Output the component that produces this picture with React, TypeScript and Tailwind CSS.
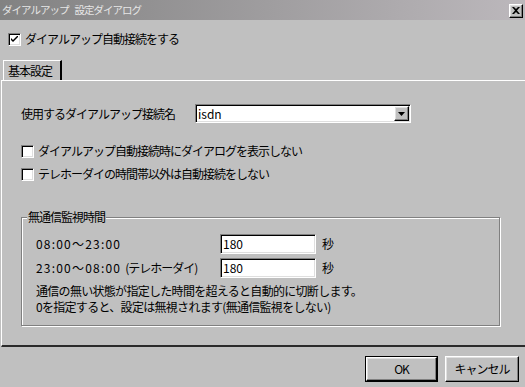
import React from "react";

// ── Win9x style bevels ────────────────────────────────────────────────────────
const raised =
  "border border-t-white border-l-white border-b-[#000] border-r-[#000] shadow-[inset_-1px_-1px_0_#808080,inset_1px_1px_0_#dfdfdf]";
const sunken =
  "border border-t-[#808080] border-l-[#808080] border-b-white border-r-white shadow-[inset_1px_1px_0_#000,inset_-1px_-1px_0_#dfdfdf]";

function CheckBox({ checked = false }: { checked?: boolean }) {
  return (
    <span className={`flex h-[13px] w-[13px] shrink-0 items-center justify-center bg-white ${sunken}`}>
      {checked && (
        <svg width="7" height="7" viewBox="0 0 7 7">
          <path d="M0 2 L0 4 L2 6 L7 1 L7 -1 L2 4 Z" fill="#000" />
        </svg>
      )}
    </span>
  );
}

function CheckRow({ label, checked }: { label: string; checked?: boolean }) {
  return (
    <label className="flex items-center gap-[4px] leading-[14px]">
      <CheckBox checked={checked} />
      <span>{label}</span>
    </label>
  );
}

function TimeRow({ time, note, value }: { time: string; note?: string; value: string }) {
  return (
    <div className="flex h-[20px] items-center">
      <span className="w-[198px] pl-[14px]">
        <span className="tracking-[1.2px]">{time}</span>
        {note && <span className="ml-[4px]">{note}</span>}
      </span>
      <div className={`flex h-[20px] w-[96px] items-center bg-white pl-[2px] tracking-normal text-black ${sunken}`}>
        {value}
      </div>
      <span className="ml-[6px]">秒</span>
    </div>
  );
}

export default function App() {
  return (
    <div
      className="flex h-[387px] w-[525px] flex-col overflow-hidden bg-[#c0c0c0] text-[12px] tracking-[-1px] text-[#000]"
      style={{ fontFamily: '"Noto Sans CJK JP", "Noto Sans", sans-serif' }}
    >
      {/* ── Title bar ─────────────────────────────────────────────────── */}
      <div className="flex h-[20px] shrink-0 items-center justify-between bg-gradient-to-r from-[#828282] to-[#bcb8bc] pl-[2px] pr-[2px]">
        <span className="flex text-[10.5px] leading-[14px] tracking-[-1px] text-[#e6e6e6]">
          <span>ダイアルアップ</span>
          <span className="ml-[6px]">設定ダイアログ</span>
        </span>
        <button className={`mt-[1px] flex h-[14px] w-[14px] items-center justify-center bg-[#c0c0c0] ${raised}`}>
          <svg width="8" height="7" viewBox="0 0 8 7">
            <path d="M0 0 L2 0 L4 2 L6 0 L8 0 L5 3.5 L8 7 L6 7 L4 5 L2 7 L0 7 L3 3.5 Z" fill="#000" />
          </svg>
        </button>
      </div>

      {/* ── Main checkbox ─────────────────────────────────────────────── */}
      <div className="mt-[12px] pl-[8px]">
        <CheckRow label="ダイアルアップ自動接続をする" checked />
      </div>

      {/* ── Tab header ────────────────────────────────────────────────── */}
      <div className="mt-[14px] flex h-[20px] pl-[3px]">
        <div className="flex items-center border-l border-t border-r-2 border-l-white border-t-white border-r-[#000] pl-[4px] pr-[8px] leading-[14px]">
          基本設定
        </div>
      </div>

      {/* ── Tab page ──────────────────────────────────────────────────── */}
      <div className="ml-[1px] flex h-[267px] shrink-0 flex-col border-l border-t border-b-2 border-l-white border-t-white border-b-[#2a2a2a] pl-[19px]">
        <div className="mt-[23px] flex h-[19px] items-center">
          <span className="w-[174px] leading-[14px]">使用するダイアルアップ接続名</span>
          <div className={`flex h-[19px] w-[216px] items-center justify-between bg-white pl-[2px] pr-[1px] tracking-normal text-black ${sunken}`}>
            <span>isdn</span>
            <span className={`flex h-[15px] w-[15px] items-center justify-center bg-[#c0c0c0] ${raised}`}>
              <svg width="7" height="4" viewBox="0 0 7 4">
                <path d="M0 0 L7 0 L3.5 4 Z" fill="#000" />
              </svg>
            </span>
          </div>
        </div>

        <div className="mt-[21px]">
          <CheckRow label="ダイアルアップ自動接続時にダイアログを表示しない" />
        </div>
        <div className="mt-[9px]">
          <CheckRow label="テレホーダイの時間帯以外は自動接続をしない" />
        </div>

        {/* Group box */}
        <div className="relative mt-[36px] h-[109px] w-[479px] border border-[#808080] shadow-[inset_1px_1px_0_#fff,1px_1px_0_#fff]">
          <span className="absolute -top-[8px] left-[5px] bg-[#c0c0c0] px-[1px] leading-[14px]">
            無通信監視時間
          </span>
          <div className="mt-[16px] flex flex-col gap-[4px]">
            <TimeRow time="08:00〜23:00" value="180" />
            <TimeRow time="23:00〜08:00" note="(テレホーダイ)" value="180" />
          </div>
          <div className="mt-[5px] pl-[14px] leading-[16px] tracking-[-0.7px]">
            <p>通信の無い状態が指定した時間を超えると自動的に切断します。</p>
            <p>0を指定すると、設定は無視されます(無通信監視をしない)</p>
          </div>
        </div>
      </div>

      {/* ── Buttons ───────────────────────────────────────────────────── */}
      <div className="mt-[9px] flex justify-end gap-[7px] pr-[6px]">
        <button className="h-[26px] w-[73px] border border-[#000] bg-[#c0c0c0] p-0">
          <span className={`flex h-full w-full items-center justify-center ${raised}`}>OK</span>
        </button>
        <button className={`flex h-[26px] w-[74px] items-center justify-center bg-[#c0c0c0] ${raised}`}>
          キャンセル
        </button>
      </div>
    </div>
  );
}
